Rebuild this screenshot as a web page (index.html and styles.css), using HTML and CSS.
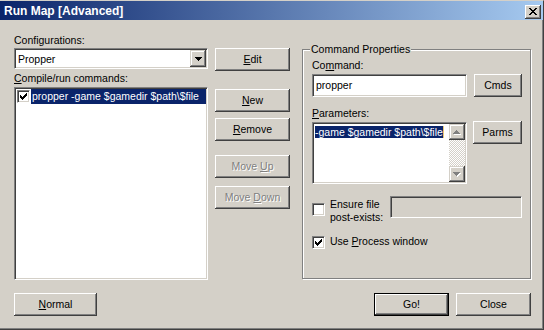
FILE: index.html
```html
<!DOCTYPE html>
<html lang="en">
<head>
    <meta charset="UTF-8">
    <title>Run Map [Advanced]</title>
    <link rel="stylesheet" href="styles.css">
</head>
<body>
<div class="window">
    <div class="titlebar">
        <span class="title">Run Map [Advanced]</span>
        <span class="close-btn">
            <svg width="16" height="14" viewBox="0 0 16 14"><path fill="#000" d="M4 3h2v1h-2z M10 3h2v1h-2z M5 4h2v1h-2z M9 4h2v1h-2z M6 5h4v1h-4z M7 6h2v1h-2z M6 7h4v1h-4z M5 8h2v1h-2z M9 8h2v1h-2z M4 9h2v1h-2z M10 9h2v1h-2z"/></svg>
        </span>
    </div>

    <div class="client">
        <div class="main">
            <!-- configurations + command list -->
            <div class="col-left">
                <div class="label">Configurations:</div>
                <div class="field combo">
                    <span class="combo-text">Propper</span>
                    <span class="combo-btn">
                        <svg width="16" height="17" viewBox="0 0 16 17"><path fill="#000" d="M5 7h7v1h-1v1h-1v1h-1v1h-1v-1h-1v-1h-1v-1h-1z"/></svg>
                    </span>
                </div>
                <div class="label label-list"><u>C</u>ompile/run commands:</div>
                <div class="field listbox">
                    <div class="list-item">
                        <span class="check">
                            <svg width="11" height="11" viewBox="1 1 11 11"><path fill="#000" d="M3 5v3h1v1h1v1h1v-1h1v-1h1v-1h1v-1h1v-3h-1v1h-1v1h-1v1h-1v1h-1v-1h-1v-1z"/></svg>
                        </span>
                        <span class="item-text">propper -game $gamedir $path\$file</span>
                    </div>
                </div>
            </div>

            <div class="col-buttons">
                <button class="btn btn-edit"><u>E</u>dit</button>
                <button class="btn btn-new"><u>N</u>ew</button>
                <button class="btn btn-remove"><u>R</u>emove</button>
                <button class="btn btn-up disabled">Move <u>U</u>p</button>
                <button class="btn btn-down disabled">Move <u>D</u>own</button>
            </div>

            <fieldset class="group">
                <legend>Command Properties</legend>

                <div class="label">Co<u>m</u>mand:</div>
                <div class="row">
                    <div class="field text-input">propper</div>
                    <button class="btn btn-small btn-cmds">Cmds</button>
                </div>

                <div class="row row-params">
                    <div class="params">
                        <div class="label"><u>P</u>arameters:</div>
                        <div class="field textarea">
                            <div class="ta-text"><span class="sel">-game $gamedir $path\$file</span></div>
                            <div class="scrollbar">
                                <span class="sb-btn">
                                    <svg width="16" height="16" viewBox="0 0 16 16"><path fill="#fff" d="M8 7h1v1h1v1h1v1h1v1h-7v-1h1v-1h1v-1h1z"/><path fill="#808080" d="M7 6h1v1h1v1h1v1h1v1h-7v-1h1v-1h1v-1h1z"/></svg>
                                </span>
                                <span class="sb-track"></span>
                                <span class="sb-btn">
                                    <svg width="16" height="16" viewBox="0 0 16 16"><path fill="#fff" d="M5 7h7v1h-1v1h-1v1h-1v1h-1v-1h-1v-1h-1v-1h-1z"/><path fill="#808080" d="M4 6h7v1h-1v1h-1v1h-1v1h-1v-1h-1v-1h-1v-1h-1z"/></svg>
                                </span>
                            </div>
                        </div>
                    </div>
                    <button class="btn btn-small btn-parms">Parms</button>
                </div>

                <div class="row row-ensure">
                    <span class="check check-ensure"></span>
                    <span class="check-label">Ensure file<br>post-exists:</span>
                    <div class="field ensure-input"></div>
                </div>

                <div class="row row-process">
                    <span class="check">
                        <svg width="11" height="11" viewBox="1 1 11 11"><path fill="#000" d="M3 5v3h1v1h1v1h1v-1h1v-1h1v-1h1v-1h1v-3h-1v1h-1v1h-1v1h-1v1h-1v-1h-1v-1z"/></svg>
                    </span>
                    <span class="check-label">Use <u>P</u>rocess window</span>
                </div>
            </fieldset>
        </div>

        <div class="bottom-row">
            <button class="btn btn-normal"><u>N</u>ormal</button>
            <span class="spacer"></span>
            <button class="btn btn-default">Go!</button>
            <button class="btn btn-close">Close</button>
        </div>
    </div>
</div>
</body>
</html>
```

FILE: styles.css
```css
body {
	margin: 0;
	font-family: "Liberation Sans", Arial, sans-serif;
	font-size: 10.5px;
	line-height: 13px;
	color: #000;
}

.window {
	width: 544px;
	height: 330px;
	box-sizing: border-box;
	background-color: #d4d0c8;
	border-top: 1px solid #d4d0c8;
	border-right: 1px solid #404040;
	border-bottom: 1px solid #404040;
	display: flex;
	flex-direction: column;
}

/* title bar */
.titlebar {
	height: 19px;
	flex: none;
	display: flex;
	background: linear-gradient(to right, #0a246a, #a6caf0);
}

.title {
	flex: 1;
	padding: 1px 0 0 4px;
	line-height: 18px;
	font-size: 12px;
	font-weight: bold;
	color: #fff;
	white-space: nowrap;
}

.close-btn {
	width: 16px;
	height: 14px;
	margin: 4px 2px 0 0;
	background-color: #d4d0c8;
	box-shadow: inset -1px -1px #404040, inset 1px 1px #fff, inset -2px -2px #808080;
}

.close-btn svg {
	display: block;
}

/* client area */
.client {
	flex: 1;
	padding: 14px 12px 0 14px;
	box-shadow: inset -1px -1px #808080;
}

.main {
	display: flex;
	align-items: flex-start;
	height: 246px;
}

.label {
	white-space: nowrap;
}

u {
	text-decoration: underline;
	text-underline-offset: 1px;
}

/* sunken fields */
.field {
	box-sizing: border-box;
	background-color: #fff;
	border: 1px solid;
	border-color: #808080 #fff #fff #808080;
	box-shadow: inset 1px 1px #404040, inset -1px -1px #d4d0c8;
}

.col-left {
	width: 194px;
	flex: none;
}

.combo {
	height: 21px;
	margin-top: 1px;
	display: flex;
	padding: 1px;
}

.combo-text {
	flex: 1;
	padding: 3px 0 0 2px;
}

.combo-btn {
	width: 16px;
	height: 17px;
	background-color: #d4d0c8;
	box-shadow: inset -1px -1px #404040, inset 1px 1px #d4d0c8, inset -2px -2px #808080, inset 2px 2px #fff;
}

.combo-btn svg,
.sb-btn svg,
.check svg {
	display: block;
}

.label-list {
	margin-top: 3px;
}

.listbox {
	height: 193px;
	margin-top: 2px;
	padding: 1px;
}

.list-item {
	display: flex;
	align-items: center;
	height: 15px;
	padding-left: 1px;
}

/* checkboxes */
.check {
	width: 13px;
	height: 13px;
	flex: none;
	box-sizing: border-box;
	background-color: #fff;
	border: 1px solid;
	border-color: #808080 #fff #fff #808080;
	box-shadow: inset 1px 1px #404040, inset -1px -1px #d4d0c8;
}

.item-text {
	flex: 1;
	margin-left: 1px;
	height: 15px;
	line-height: 15px;
	padding-left: 1px;
	background-color: #0a246a;
	color: #fff;
	white-space: nowrap;
}

/* buttons */
.btn {
	display: block;
	box-sizing: border-box;
	width: 75px;
	height: 23px;
	padding: 0;
	border: 0;
	font: inherit;
	color: #000;
	background-color: #d4d0c8;
	box-shadow: inset -1px -1px #404040, inset 1px 1px #fff, inset -2px -2px #808080;
	text-align: center;
	white-space: nowrap;
}

.btn.disabled {
	color: #808080;
	text-shadow: 1px 1px #fff;
}

.col-buttons {
	width: 75px;
	flex: none;
	margin-left: 7px;
	padding-top: 14px;
}

.btn-new { margin-top: 18px; }
.btn-remove { margin-top: 6px; }
.btn-up { margin-top: 14px; }
.btn-down { margin-top: 8px; }

/* group box */
.group {
	box-sizing: border-box;
	width: 229px;
	height: 236px;
	margin: 9px 0 0 12px;
	padding: 3px 8px 0 9px;
	min-inline-size: 0;
	border: 1px solid #808080;
	box-shadow: 1px 1px #fff, inset 1px 1px #fff;
}

.group legend {
	padding: 0 1px;
	margin-left: -2px;
	line-height: 13px;
	background-color: #d4d0c8;
	white-space: nowrap;
}

.row {
	display: flex;
	align-items: flex-start;
}

.text-input {
	width: 155px;
	height: 23px;
	margin-top: 2px;
	padding: 4px 0 0 3px;
}

.btn-small {
	width: 48px;
}

.btn-cmds {
	margin: 2px 0 0 7px;
}

.row-params {
	margin-top: 10px;
}

.params {
	width: 155px;
}

.textarea {
	height: 62px;
	margin-top: 2px;
	padding: 1px;
	display: flex;
}

.ta-text {
	flex: 1;
	padding: 2px 0 0 1px;
	white-space: nowrap;
	overflow: hidden;
}

.sel {
	background-color: #0a246a;
	color: #fff;
	border-right: 1px solid #e8c878;
}

.scrollbar {
	width: 16px;
	display: flex;
	flex-direction: column;
}

.sb-btn {
	height: 16px;
	background-color: #d4d0c8;
	box-shadow: inset -1px -1px #404040, inset 1px 1px #d4d0c8, inset -2px -2px #808080, inset 2px 2px #fff;
}

.sb-track {
	flex: 1;
	background: repeating-conic-gradient(#fff 0 25%, #d4d0c8 0 50%) 0 0 / 2px 2px;
}

.btn-parms {
	width: 49px;
	margin: 14px 0 0 6px;
}

.row-ensure {
	margin-top: 12px;
}

.check-ensure {
	margin-top: 7px;
}

.check-label {
	margin-left: 5px;
	white-space: nowrap;
}

.row-ensure .check-label {
	margin-top: 2px;
}

.ensure-input {
	width: 132px;
	height: 22px;
	margin-left: auto;
	background-color: #d4d0c8;
}

.row-process {
	margin-top: 11px;
}

.row-process .check {
	margin-top: 1px;
}

/* bottom buttons */
.bottom-row {
	display: flex;
	margin-top: 13px;
}

.btn-normal {
	width: 83px;
}

.spacer {
	flex: 1;
}

.btn-default {
	border: 1px solid #000;
	box-shadow: inset -1px -1px #404040, inset 1px 1px #fff, inset -2px -2px #808080;
}

.btn-close {
	margin-left: 7px;
}
```
